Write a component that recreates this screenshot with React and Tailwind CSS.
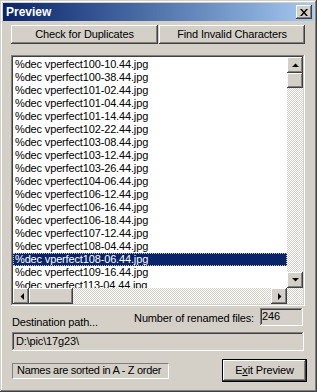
import React from 'react';

const raised =
  'shadow-[inset_-1px_-1px_#404040,inset_1px_1px_#ffffff,inset_-2px_-2px_#808080,inset_2px_2px_#d4d0c8]';
const sunken =
  'shadow-[inset_-1px_-1px_#ffffff,inset_1px_1px_#808080,inset_-2px_-2px_#d4d0c8,inset_2px_2px_#404040]';
const checker =
  'bg-[repeating-conic-gradient(#d4d0c8_0%_25%,#ffffff_0%_50%)] bg-[length:2px_2px]';

const files = [
  '100-10.44', '100-38.44', '101-02.44', '101-04.44', '101-14.44', '102-22.44',
  '103-08.44', '103-12.44', '103-26.44', '104-06.44', '106-12.44', '106-16.44',
  '106-18.44', '107-12.44', '108-04.44', '108-06.44', '109-16.44', '113-04.44',
];

const Arrow = ({ dir }) => {
  const pts = {
    up: '0,4 7,4 3.5,0.5',
    down: '0,0 7,0 3.5,3.5',
    left: '4,0 4,7 0.5,3.5',
    right: '0,0 0,7 3.5,3.5',
  }[dir];
  const vertical = dir === 'up' || dir === 'down';
  return (
    <div className={`w-[16px] h-[16px] shrink-0 flex items-center justify-center bg-[#d4d0c8] ${raised}`}>
      <svg width={vertical ? 7 : 4} height={vertical ? 4 : 7} className={vertical ? '' : 'ml-[1px]'}>
        <polygon points={pts} fill="#000" />
      </svg>
    </div>
  );
};

const App = () => {
  return (
    <div className="w-[317px] h-[392px] p-[3px] flex flex-col bg-[#d4d0c8] shadow-[inset_-1px_-1px_#404040,inset_1px_1px_#d4d0c8,inset_-2px_-2px_#808080,inset_2px_2px_#ffffff] font-['Liberation_Sans',Arial,sans-serif] text-[11px] tracking-[-0.15px] text-black overflow-hidden">
      {/* title bar */}
      <div className="h-[18px] shrink-0 flex items-center justify-between pl-[3px] pr-[2px] bg-gradient-to-r from-[#0a246a] to-[#a6caf0]">
        <span className="text-white font-bold text-[12px] tracking-normal leading-none">Preview</span>
        <div className={`w-[16px] h-[14px] flex items-center justify-center bg-[#d4d0c8] ${raised}`}>
          <svg width="8" height="7" viewBox="0 0 8 7">
            <path d="M0 0h2l2 2.5L6 0h2L5 3.5 8 7H6L4 4.5 2 7H0l3-3.5z" fill="#000" />
          </svg>
        </div>
      </div>

      <div className="flex-1 flex flex-col pl-[8px] pr-[9px]">
        {/* buttons */}
        <div className="mt-[4px] flex gap-[1px]">
          <div className={`w-[147px] h-[19px] flex items-center justify-center bg-[#d4d0c8] ${raised}`}>
            Check for Duplicates
          </div>
          <div className={`w-[146px] h-[19px] flex items-center justify-center bg-[#d4d0c8] ${raised}`}>
            Find Invalid Characters
          </div>
        </div>

        {/* file list */}
        <div className={`mt-[11px] h-[251px] p-[2px] bg-white ${sunken}`}>
          <div className="h-full flex flex-col">
            <div className="flex-1 flex min-h-0">
              <div className="flex-1 overflow-hidden pt-[1px]">
                {files.map((f) => {
                  const sel = f === '108-06.44';
                  return (
                    <div
                      key={f}
                      className={`h-[13px] leading-[13px] pl-[2px] whitespace-nowrap ${
                        sel ? 'bg-[#0a246a] text-white outline-1 outline-dotted outline-[#c8c4a0] -outline-offset-1' : ''
                      }`}
                    >
                      %dec vperfect{f}.jpg
                    </div>
                  );
                })}
              </div>
              <div className={`w-[16px] flex flex-col ${checker}`}>
                <Arrow dir="up" />
                <div className={`h-[15px] bg-[#d4d0c8] ${raised}`} />
                <div className="flex-1" />
                <Arrow dir="down" />
              </div>
            </div>
            <div className="h-[16px] flex">
              <div className={`flex-1 flex ${checker}`}>
                <Arrow dir="left" />
                <div className={`w-[44px] h-[16px] bg-[#d4d0c8] ${raised}`} />
                <div className="flex-1" />
                <Arrow dir="right" />
              </div>
              <div className={`w-[16px] h-[16px] ${checker}`} />
            </div>
          </div>
        </div>

        {/* counts */}
        <div className="mt-[2px] h-[21px] flex items-end justify-between">
          <span className="ml-[1px] leading-[13px]">Destination path...</span>
          <div className="self-start flex items-center mr-[2px]">
            <span className="leading-[13px] mt-[2px]">Number of renamed files:</span>
            <div className={`ml-[6px] w-[43px] h-[18px] pl-[2px] pt-[2px] leading-[13px] bg-[#d4d0c8] ${sunken}`}>
              246
            </div>
          </div>
        </div>

        {/* destination */}
        <div className={`mt-[3px] ml-[1px] w-[292px] h-[19px] pl-[4px] flex items-center bg-[#d4d0c8] ${sunken}`}>
          D:\pic\17g23\
        </div>

        {/* footer */}
        <div className="mt-[8px] flex items-center justify-between -mr-[2px]">
          <div className="ml-[1px] w-[157px] h-[16px] pl-[4px] flex items-center whitespace-nowrap overflow-hidden tracking-[-0.3px] border border-t-[#808080] border-l-[#808080] border-b-white border-r-white">
            Names are sorted in A - Z order
          </div>
          <div className="w-[85px] h-[23px] border border-black">
            <div className={`w-full h-full flex items-center justify-center bg-[#d4d0c8] ${raised}`}>
              <span>
                E<u>x</u>it Preview
              </span>
            </div>
          </div>
        </div>
      </div>
    </div>
  );
};

export default App;
